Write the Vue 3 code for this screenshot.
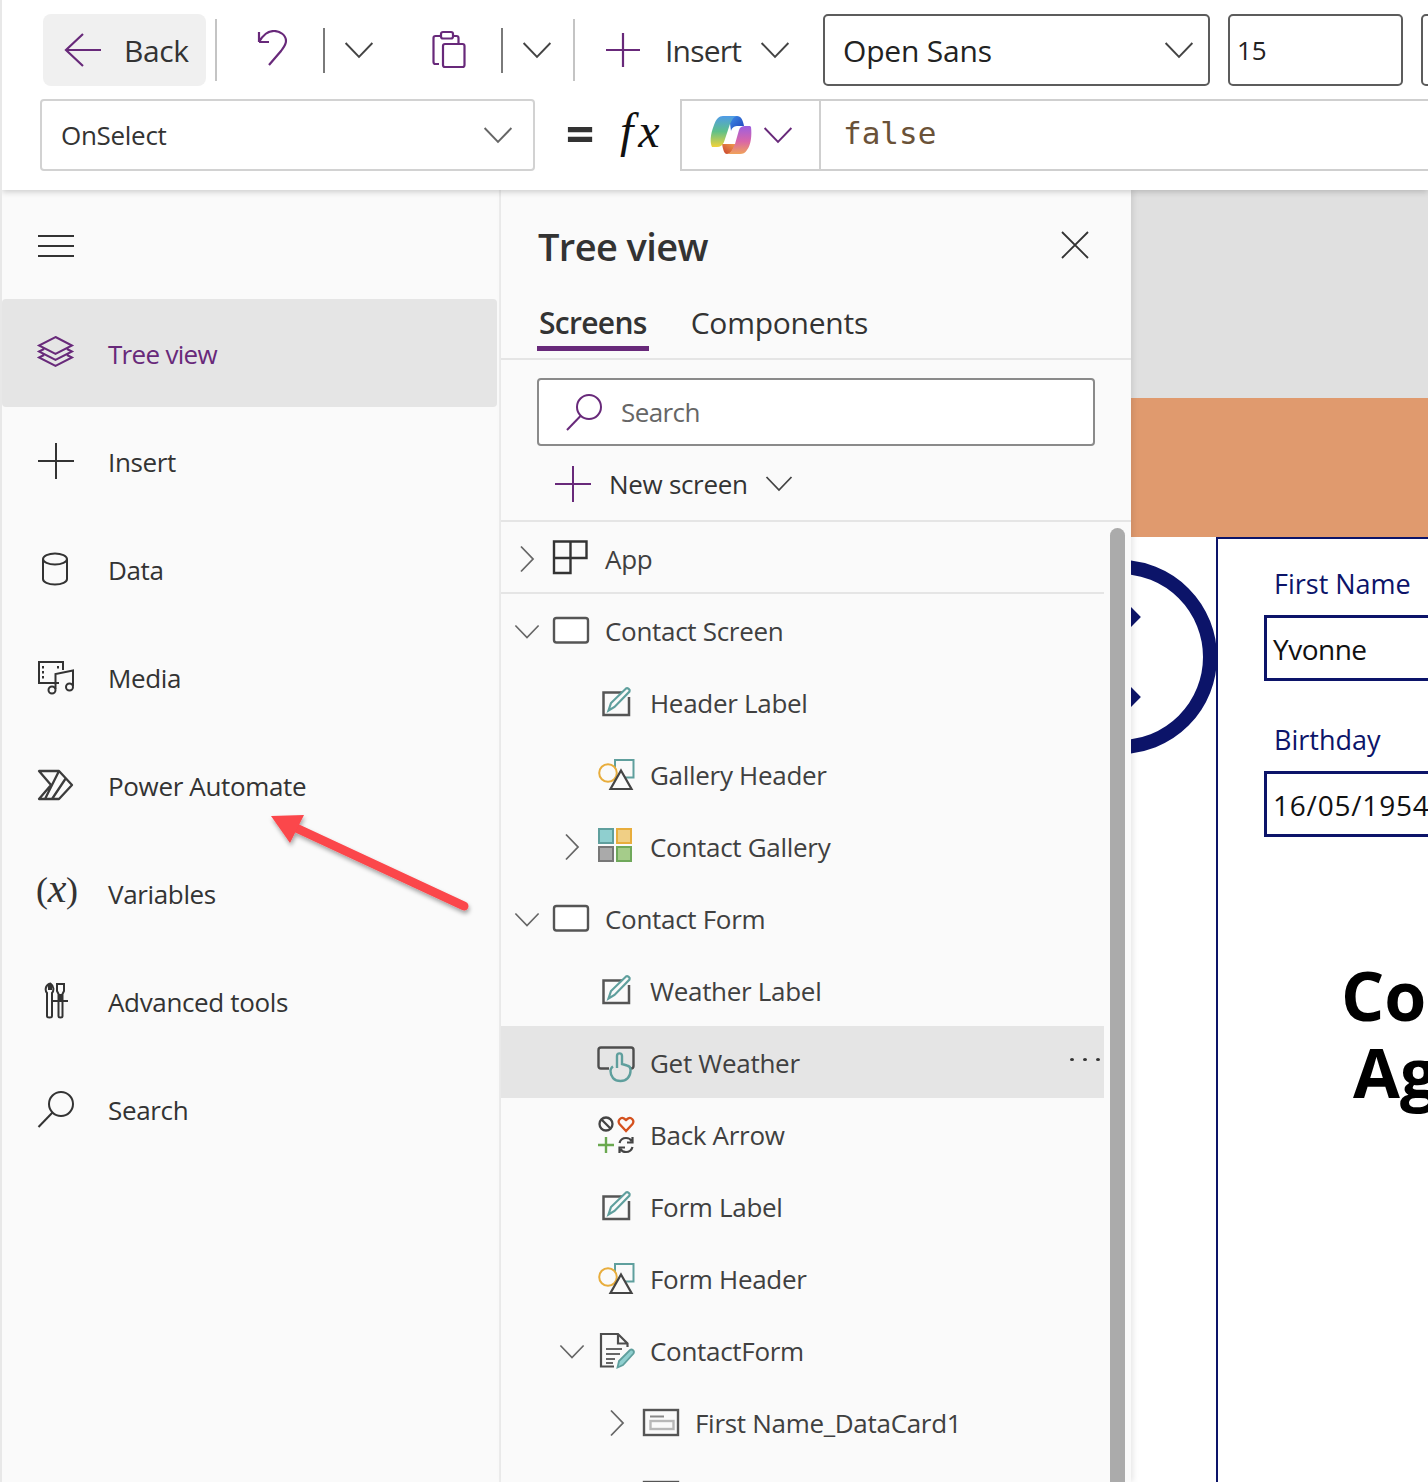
<template>
  <div class="app">
    <svg class="defs" width="0" height="0" aria-hidden="true">
      <defs>
        <linearGradient id="cp-left" x1="0" y1="0" x2="0" y2="1">
          <stop offset="0" stop-color="#4f9be8" />
          <stop offset="0.5" stop-color="#5fc08a" />
          <stop offset="1" stop-color="#f2d338" />
        </linearGradient>
        <linearGradient id="cp-right" x1="0" y1="0" x2="0" y2="1">
          <stop offset="0" stop-color="#9d5fe0" />
          <stop offset="0.55" stop-color="#d966a8" />
          <stop offset="1" stop-color="#f0a25a" />
        </linearGradient>
        <linearGradient id="cp-top" x1="0" y1="0" x2="1" y2="1">
          <stop offset="0" stop-color="#3f8fe8" />
          <stop offset="1" stop-color="#1f3fb8" />
        </linearGradient>
        <linearGradient id="cp-bottom" x1="1" y1="0" x2="0" y2="1">
          <stop offset="0" stop-color="#f0a050" />
          <stop offset="1" stop-color="#c8402c" />
        </linearGradient>
      </defs>
      <symbol id="chev-down" viewBox="0 0 28 16">
        <path d="M1.5 1.5 14 14.5 26.500 1.5" fill="none" stroke="currentColor" stroke-width="1.800" />
      </symbol>
      <symbol id="chev-right" viewBox="0 0 28 28">
        <path d="M8 1.500 20 14 8 26.500" fill="none" stroke="#666" stroke-width="1.800" />
      </symbol>
      <symbol id="ic-app" viewBox="0 0 40 40">
        <path d="M3 1.500h16.500v16.500H3zM19.500 1.500H35.500V18H19.500zM3 18h16.500v15H3z" fill="none" stroke="#333" stroke-width="2.400" />
      </symbol>
      <symbol id="ic-screen" viewBox="0 0 40 40">
        <rect x="3" y="6" width="34" height="24.500" rx="2.500" fill="#fff" stroke="#555" stroke-width="2.400" />
      </symbol>
      <symbol id="ic-label" viewBox="0 0 40 40">
        <path d="M28 8.500H7.500V31H33V13" fill="none" stroke="#555" stroke-width="2.500" />
        <path d="M12.500 26.500 15 19 30 4.500c1.500-1 4.500 1 3.500 3L18.500 23z" fill="#fafafa" stroke="#5f9f9d" stroke-width="2.200" />
      </symbol>
      <symbol id="ic-shapes" viewBox="0 0 40 40">
        <rect x="19" y="4" width="18.500" height="17.500" fill="#fafafa" stroke="#5f9f9d" stroke-width="2" />
        <circle cx="12" cy="17" r="8.800" fill="#fafafa" stroke="#e8ad3c" stroke-width="2" />
        <path d="M25 14.500 35.500 33h-21z" fill="#fafafa" stroke="#444" stroke-width="2.200" />
      </symbol>
      <symbol id="ic-gallery" viewBox="0 0 40 40">
        <rect x="3" y="1" width="14" height="14" fill="#8fcfcf" stroke="#5f9f9d" stroke-width="2" />
        <rect x="21" y="1" width="14" height="14" fill="#f0cf85" stroke="#e8ad3c" stroke-width="2" />
        <rect x="3" y="19" width="14" height="14" fill="#aaa" stroke="#777" stroke-width="2" />
        <rect x="21" y="19" width="14" height="14" fill="#a5cc8a" stroke="#6fa85a" stroke-width="2" />
      </symbol>
      <symbol id="ic-button" viewBox="0 0 40 40">
        <path d="M13 24.500H5c-1.500 0-2.500-1-2.500-2.500V6c0-1.500 1-2.500 2.500-2.500h30c1.500 0 2.500 1 2.500 2.500v16c0 1.500-1 2.500-2.500 2.500h-2" fill="none" stroke="#4d4d4d" stroke-width="2.400" />
        <path d="M21 24V12c0-3.500 5-3.500 5 0v8l5 1.500c2 .5 3.500 2 3.500 4V27c0 5.500-4 10-10 10-6.500 0-10-4.500-10-10 0-2 1-3.500 2.500-4.500" fill="#e6e6e6" stroke="#5f9f9d" stroke-width="2.400" />
      </symbol>
      <symbol id="ic-icons" viewBox="0 0 40 40">
        <circle cx="10" cy="8" r="6.500" fill="none" stroke="#444" stroke-width="2.300" />
        <path d="M5.500 3.500 14.500 12.500" stroke="#444" stroke-width="2.300" />
        <path d="M30 15 23.500 8C21 4.500 25 .5 28 2.500l2 1.500 2-1.500c3-2 7 2 4.500 5.500z" fill="none" stroke="#d4511e" stroke-width="2.300" />
        <path d="M2 29H18M10 21V37" stroke="#6aa84f" stroke-width="2.400" />
        <path d="M23.500 27c1-3.500 3.500-5 6.500-5 2.500 0 4.500 1 5.500 3M36.500 21v5.500h-5.500M36.500 31c-1 3.500-3.500 5-6.500 5-2.500 0-4.500-1-5.500-3M23.500 37v-5.500h5.500" fill="none" stroke="#444" stroke-width="2.200" />
      </symbol>
      <symbol id="ic-form" viewBox="0 0 40 40">
        <path d="M18 34.500H5V2h17l9.500 9.500V15M22 2v9.500h9.500" fill="none" stroke="#4d4d4d" stroke-width="2.200" />
        <path d="M10 17H26M10 22H24M10 27H19M10 31H17" stroke="#666" stroke-width="1.800" />
        <path d="M21.500 35.500 23 29 34 18c2-1.500 5 1 3.500 3.500L27 33z" fill="#8fcfcf" stroke="#5f9f9d" stroke-width="1.800" />
      </symbol>
      <symbol id="ic-card" viewBox="0 0 40 40">
        <rect x="3" y="6" width="34" height="25" fill="none" stroke="#555" stroke-width="2.400" />
        <path d="M9 12.500H23" stroke="#888" stroke-width="2" />
        <rect x="9.500" y="17" width="23" height="8" fill="none" stroke="#b8b8b8" stroke-width="2.400" />
      </symbol>
    </svg>

    <header class="ribbon">
      <div class="ribbon-row">
        <button type="button" class="back-btn">
          <svg class="ic" width="40" height="40" viewBox="0 0 40 40">
            <path d="M20 4 3 20 20 36M3 20H38" fill="none" stroke="#68297a" stroke-width="2.200" />
          </svg>
          <span>Back</span>
        </button>
        <i class="sep tall" style="margin-left: 9px"></i>
        <svg class="ic undo" width="40" height="40" viewBox="0 0 40 40">
          <path d="M7 12V2M7 12H17M7 12C11 5 16 1 22 1c6 0 12 4 12 10 0 4-3 7-5 10L17 35" fill="none" stroke="#68297a" stroke-width="2.200" />
        </svg>
        <i class="sep short" style="margin-left: 31px"></i>
        <svg class="chev" width="30" height="18" style="margin-left: 19px"><use href="#chev-down" /></svg>
        <svg class="ic" width="40" height="40" viewBox="0 0 40 40" style="margin-left: 55px">
          <path d="M10 34H6.500C5 34 4.500 33 4.500 32V8c0-1 .5-2 2-2H12M24 6h3.500c1.500 0 2 1 2 2v6" fill="none" stroke="#68297a" stroke-width="2.200" />
          <rect x="12" y="2" width="12" height="6.500" rx="2" fill="none" stroke="#68297a" stroke-width="2.200" />
          <rect x="14" y="14" width="21.500" height="23" rx="2" fill="none" stroke="#68297a" stroke-width="2.200" />
        </svg>
        <i class="sep short" style="margin-left: 32px"></i>
        <svg class="chev" width="30" height="18" style="margin-left: 19px"><use href="#chev-down" /></svg>
        <i class="sep tall" style="margin-left: 21px"></i>
        <svg class="ic" width="40" height="40" viewBox="0 0 40 40" style="margin-left: 28px">
          <path d="M20 3V37M3 20H37" fill="none" stroke="#68297a" stroke-width="2.200" />
        </svg>
        <span class="insert-label">Insert</span>
        <svg class="chev" width="30" height="18"><use href="#chev-down" /></svg>
        <div class="field font-field">
          <span>Open Sans</span>
          <svg class="chev" width="30" height="18"><use href="#chev-down" /></svg>
        </div>
        <div class="field size-field"><span>15</span></div>
        <div class="field stub-field"></div>
      </div>

      <div class="formula-row">
        <div class="prop-select">
          <span>OnSelect</span>
          <svg class="chev muted" width="30" height="18"><use href="#chev-down" /></svg>
        </div>
        <span class="equals">=</span>
        <span class="fx">fx</span>
        <div class="formula-box">
          <div class="copilot-cell">
            <svg width="42" height="40" viewBox="0 0 42 40">
              <path d="M19 1H27C31 1 33 5 34 11H28C25 11 22 12 21 16Z" fill="url(#cp-top)" />
              <path d="M12 29H26L22 36C21 38 19 39 17 39 14 39 13 34 12 29Z" fill="url(#cp-bottom)" />
              <path d="M13 1H27C23 2 21 6 19 12L14 27C13 30 10 32 7 32H2C0 28 0 20 4 10 6 4 9 1 13 1Z" fill="url(#cp-left)" />
              <path d="M41 12C42 20 41 30 37 35 35 38 33 39 30 39H17C21 38 23 34 25 29L29 15C30 12 32 11 35 11H40Z" fill="url(#cp-right)" />
            </svg>
            <svg class="chev purple" width="30" height="18"><use href="#chev-down" /></svg>
          </div>
          <span class="formula-text">false</span>
        </div>
      </div>
    </header>

    <main class="body">
      <nav class="sidebar">
        <div class="hamburger"><i></i><i></i><i></i></div>

        <div class="nav-item active">
          <svg class="ic" width="40" height="40" viewBox="0 0 40 40">
            <path d="M19.500 4 36 12.500 19.500 21 3 12.500ZM8 16 3 18.500 19.500 27 36 18.500 31 16M8 22 3 24.500 19.500 33 36 24.500 31 22" fill="none" stroke="#68297a" stroke-width="2" />
          </svg>
          <span>Tree view</span>
        </div>
        <div class="nav-item">
          <svg class="ic" width="40" height="40" viewBox="0 0 40 40">
            <path d="M20 2V38M2 20H38" fill="none" stroke="#333" stroke-width="2" />
          </svg>
          <span>Insert</span>
        </div>
        <div class="nav-item">
          <svg class="ic" width="40" height="40" viewBox="0 0 40 40">
            <path d="M7 10V30C7 33 12 35.500 19 35.500S31 33 31 30V10" fill="none" stroke="#333" stroke-width="2" />
            <ellipse cx="19" cy="10" rx="12" ry="5.500" fill="none" stroke="#333" stroke-width="2" />
          </svg>
          <span>Data</span>
        </div>
        <div class="nav-item">
          <svg class="ic" width="40" height="40" viewBox="0 0 40 40">
            <path d="M23 26H3V5H27V13" fill="none" stroke="#333" stroke-width="2" />
            <path d="M7 9V23M22 9V12" fill="none" stroke="#333" stroke-width="2" stroke-dasharray="2.500 2.500" />
            <path d="M19.500 32V17L37 13.500V29" fill="none" stroke="#333" stroke-width="2" />
            <circle cx="16" cy="33" r="3.500" fill="none" stroke="#333" stroke-width="2" />
            <circle cx="33.500" cy="30" r="3.500" fill="none" stroke="#333" stroke-width="2" />
          </svg>
          <span>Media</span>
        </div>
        <div class="nav-item">
          <svg class="ic" width="40" height="40" viewBox="0 0 40 40">
            <path d="M3 6H23L36 20 23 34H3L15 20ZM23 6 9 34M30 13 16 34" fill="none" stroke="#3c3c3c" stroke-width="2.300" stroke-linejoin="round" />
          </svg>
          <span>Power Automate</span>
        </div>
        <div class="nav-item">
          <span class="var-icon">(<em>x</em>)</span>
          <span>Variables</span>
        </div>
        <div class="nav-item">
          <svg class="ic" width="40" height="40" viewBox="0 0 40 40">
            <path d="M13 3C9 5 9 10 11 12V35C11 37 16 37 16 35V12C18 10 18 5 15 3V8H13Z" fill="none" stroke="#333" stroke-width="2" />
            <path d="M21 3H28V10L26.500 13V35C26.500 37 22.500 37 22.500 35V13L21 10ZM16 20H32M24.500 13V20" fill="none" stroke="#333" stroke-width="2" />
          </svg>
          <span>Advanced tools</span>
        </div>
        <div class="nav-item">
          <svg class="ic" width="40" height="40" viewBox="0 0 40 40">
            <circle cx="25" cy="15" r="12" fill="none" stroke="#333" stroke-width="2" />
            <path d="M16.500 23.500 2.500 38" fill="none" stroke="#333" stroke-width="2" />
          </svg>
          <span>Search</span>
        </div>
      </nav>

      <aside class="tree-panel">
        <div class="tree-title">
          <h2>Tree view</h2>
          <svg width="30" height="30" viewBox="0 0 30 30">
            <path d="M2 2 28 28M28 2 2 28" fill="none" stroke="#333" stroke-width="1.800" />
          </svg>
        </div>
        <div class="tabs">
          <span class="tab selected">Screens</span>
          <span class="tab">Components</span>
        </div>
        <div class="tree-search">
          <svg width="40" height="40" viewBox="0 0 40 40">
            <circle cx="25" cy="15" r="12" fill="none" stroke="#68297a" stroke-width="2" />
            <path d="M16.500 24 3 38" fill="none" stroke="#68297a" stroke-width="2" />
          </svg>
          <span>Search</span>
        </div>
        <div class="new-screen">
          <svg width="40" height="40" viewBox="0 0 40 40">
            <path d="M20 2V38M2 20H38" fill="none" stroke="#68297a" stroke-width="2" />
          </svg>
          <span>New screen</span>
          <svg class="chev" width="28" height="17"><use href="#chev-down" /></svg>
        </div>
        <div class="tree-scroll">
          <ul class="tree-list">
            <li
              v-for="row in rows"
              :key="row.id"
              class="tree-row"
              :class="{ hovered: row.hovered, ruled: row.ruled }"
              :style="{ paddingLeft: 12 + row.depth * 45 + 'px' }"
            >
              <span class="twisty">
                <svg v-if="row.twisty === 'right'" width="28" height="28"><use href="#chev-right" /></svg>
                <svg v-else-if="row.twisty === 'down'" class="chev twisty-down" width="26" height="15"><use href="#chev-down" /></svg>
              </span>
              <svg class="row-icon" width="40" height="40"><use :href="'#ic-' + row.icon" /></svg>
              <span class="row-label">{{ row.label }}</span>
              <span v-if="row.hovered" class="row-more"><i></i><i></i><i></i></span>
            </li>
          </ul>
          <div class="scrollbar"></div>
        </div>
      </aside>

      <section class="canvas">
        <div class="canvas-grey"></div>
        <div class="canvas-banner"></div>
        <div class="canvas-sheet">
          <div class="clock">
            <i class="tick tick-a"></i>
            <i class="tick tick-b"></i>
          </div>
          <div class="form-card">
            <label class="form-label">First Name</label>
            <div class="form-input name">Yvonne</div>
            <label class="form-label second">Birthday</label>
            <div class="form-input date">16/05/1954</div>
            <div class="form-heading">Co</div>
            <div class="form-heading indent">Ag</div>
          </div>
        </div>
      </section>
    </main>

    <svg class="annotation" width="220" height="110" viewBox="0 0 220 110">
      <defs>
        <filter id="arrow-shadow" x="-10%" y="-10%" width="120%" height="130%">
          <feDropShadow dx="1" dy="3" stdDeviation="2" flood-color="#000" flood-opacity="0.35" />
        </filter>
      </defs>
      <g filter="url(#arrow-shadow)">
        <path d="M32 17 202 96" fill="none" stroke="#fb464b" stroke-width="9" stroke-linecap="round" />
        <path d="M9 6 42 5 28 33Z" fill="#fb464b" />
      </g>
    </svg>
  </div>
</template>

<script setup>
const rows = [
  { id: 1, label: 'App', depth: 0, twisty: 'right', icon: 'app', ruled: true },
  { id: 2, label: 'Contact Screen', depth: 0, twisty: 'down', icon: 'screen' },
  { id: 3, label: 'Header Label', depth: 1, icon: 'label' },
  { id: 4, label: 'Gallery Header', depth: 1, icon: 'shapes' },
  { id: 5, label: 'Contact Gallery', depth: 1, twisty: 'right', icon: 'gallery' },
  { id: 6, label: 'Contact Form', depth: 0, twisty: 'down', icon: 'screen' },
  { id: 7, label: 'Weather Label', depth: 1, icon: 'label' },
  { id: 8, label: 'Get Weather', depth: 1, icon: 'button', hovered: true },
  { id: 9, label: 'Back Arrow', depth: 1, icon: 'icons' },
  { id: 10, label: 'Form Label', depth: 1, icon: 'label' },
  { id: 11, label: 'Form Header', depth: 1, icon: 'shapes' },
  { id: 12, label: 'ContactForm', depth: 1, twisty: 'down', icon: 'form' },
  { id: 13, label: 'First Name_DataCard1', depth: 2, twisty: 'right', icon: 'card' },
  { id: 14, label: '', depth: 2, icon: 'card' }
]
</script>

<style>
html,
body {
  margin: 0;
  background: #fff;
}
</style>

<style scoped>
.app {
  position: relative;
  width: 1428px;
  height: 1482px;
  overflow: hidden;
  display: flex;
  flex-direction: column;
  border-left: 2px solid #e8e8e8;
  box-sizing: border-box;
  font-family: "Open Sans", "Liberation Sans", sans-serif;
  color: #333;
  background: #fff;
}

.defs {
  position: absolute;
}

.ic {
  flex: none;
  display: block;
}

.chev {
  flex: none;
  display: block;
  color: #444;
}

.chev.muted {
  color: #666;
}

.chev.purple {
  color: #68297a;
}

/* ribbon */
.ribbon {
  flex: none;
  height: 190px;
  background: #fff;
  position: relative;
  z-index: 2;
  box-shadow: 0 2px 6px rgba(0, 0, 0, 0.18);
}

.ribbon-row {
  height: 98px;
  display: flex;
  align-items: center;
  padding: 2px 0 0 41px;
  box-sizing: border-box;
  white-space: nowrap;
}

.back-btn {
  flex: none;
  width: 163px;
  height: 72px;
  display: flex;
  align-items: center;
  gap: 21px;
  padding: 0 0 0 20px;
  border: 0;
  border-radius: 8px;
  background: #f0f0f0;
  font: inherit;
  font-size: 30px;
  letter-spacing: -0.4px;
  color: #333;
}

.sep {
  flex: none;
  display: block;
  width: 2px;
}

.sep.tall {
  height: 62px;
  background: #c4c4c4;
}

.sep.short {
  height: 45px;
  background: #7a7a7a;
}

.undo {
  margin-left: 35px;
}

.insert-label {
  flex: none;
  width: 95px;
  margin-left: 22px;
  font-size: 30px;
  letter-spacing: -0.8px;
}

.field {
  flex: none;
  box-sizing: border-box;
  height: 72px;
  margin-left: 18px;
  border: 2px solid #5c5c5c;
  border-radius: 5px;
  display: flex;
  align-items: center;
  justify-content: space-between;
  font-size: 30px;
  letter-spacing: -0.2px;
  color: #222;
}

.font-field {
  width: 387px;
  margin-left: 33px;
  padding: 0 14px 0 18px;
}

.size-field {
  width: 175px;
  padding-left: 7px;
  font-size: 26px;
}

.stub-field {
  width: 40px;
}

.formula-row {
  height: 73px;
  box-sizing: border-box;
  padding: 1px 0 0 38px;
  display: flex;
  align-items: center;
  white-space: nowrap;
}

.prop-select {
  flex: none;
  box-sizing: border-box;
  width: 495px;
  height: 72px;
  padding: 0 20px 0 19px;
  border: 2px solid #d2d2d2;
  border-radius: 4px;
  display: flex;
  align-items: center;
  justify-content: space-between;
  font-size: 26px;
  letter-spacing: -0.3px;
  color: #333;
}

.equals {
  flex: none;
  width: 30px;
  margin: -4px 0 0 30px;
  font-size: 50px;
  font-weight: 700;
  line-height: 1;
  text-align: center;
  color: #333;
}

.fx {
  flex: none;
  width: 60px;
  margin: -8px 0 0 25px;
  font-family: "Liberation Serif", serif;
  font-style: italic;
  font-size: 48px;
  letter-spacing: 5px;
  line-height: 1;
  color: #111;
}

.formula-box {
  flex: 1;
  height: 72px;
  box-sizing: border-box;
  border: 2px solid #cfcfcf;
  border-right: 0;
  display: flex;
  align-items: center;
}

.copilot-cell {
  flex: none;
  box-sizing: border-box;
  width: 139px;
  height: 100%;
  padding-left: 28px;
  border-right: 2px solid #cfcfcf;
  display: flex;
  align-items: center;
  gap: 11px;
}

.formula-text {
  margin: -5px 0 0 22px;
  font-family: "DejaVu Sans Mono", "Liberation Mono", monospace;
  font-size: 31px;
  color: #6a5238;
}

/* body */
.body {
  flex: 1;
  min-height: 0;
  display: flex;
}

.sidebar {
  flex: none;
  box-sizing: border-box;
  width: 499px;
  background: #fafafa;
  border-right: 2px solid #eee;
  padding-top: 109px;
  position: relative;
}

.hamburger {
  position: absolute;
  left: 36px;
  top: 45px;
  width: 36px;
  display: flex;
  flex-direction: column;
  gap: 8px;
}

.hamburger i {
  display: block;
  height: 2px;
  background: #333;
}

.nav-item {
  width: 495px;
  height: 108px;
  padding-left: 34px;
  box-sizing: border-box;
  display: flex;
  align-items: center;
  gap: 32px;
  font-size: 26px;
  letter-spacing: -0.35px;
  color: #333;
}

.nav-item.active {
  background: #e5e5e5;
  border-radius: 4px;
  color: #68297a;
  letter-spacing: -0.7px;
}

.nav-item > span:last-child {
  padding-top: 2px;
}

.var-icon {
  flex: none;
  width: 40px;
  margin-top: -8px;
  font-family: "Liberation Serif", serif;
  font-size: 36px;
  text-align: center;
  white-space: nowrap;
}

.var-icon em {
  font-size: 42px;
  line-height: 1;
}

.tree-panel {
  flex: none;
  width: 630px;
  background: #fafafa;
  position: relative;
  z-index: 1;
  box-shadow: 2px 0 6px rgba(0, 0, 0, 0.1);
  display: flex;
  flex-direction: column;
  min-height: 0;
}

.tree-title {
  flex: none;
  height: 116px;
  padding: 0 41px 0 37px;
  display: flex;
  align-items: center;
  justify-content: space-between;
}

.tree-title h2 {
  margin: -4px 0 0;
  font-size: 38px;
  font-weight: 600;
  letter-spacing: -0.6px;
  color: #333;
}

.tree-title svg {
  margin-top: -6px;
}

.tabs {
  flex: none;
  height: 54px;
  box-sizing: border-box;
  padding-left: 36px;
  display: flex;
  gap: 40px;
  border-bottom: 2px solid #e5e5e5;
}

.tab {
  height: 45px;
  box-sizing: border-box;
  line-height: 34px;
  padding: 0 2px;
  font-size: 30px;
  letter-spacing: -0.25px;
  color: #333;
}

.tab.selected {
  font-weight: 600;
  letter-spacing: -0.7px;
  border-bottom: 5px solid #68297a;
}

.tree-search {
  flex: none;
  box-sizing: border-box;
  width: 558px;
  height: 68px;
  margin: 18px 0 0 36px;
  padding-left: 25px;
  background: #fff;
  border: 2px solid #8a8a8a;
  border-radius: 4px;
  display: flex;
  align-items: center;
  gap: 17px;
  font-size: 26px;
  letter-spacing: -0.6px;
  color: #666;
}

.new-screen {
  flex: none;
  box-sizing: border-box;
  height: 76px;
  padding: 1px 0 0 52px;
  border-bottom: 2px solid #e5e5e5;
  display: flex;
  align-items: center;
  font-size: 26px;
  letter-spacing: -0.3px;
}

.new-screen span {
  margin: 1px 17px 0 16px;
}

.tree-scroll {
  flex: 1;
  min-height: 0;
  display: flex;
}

.tree-list {
  flex: none;
  width: 603px;
  margin: 0;
  padding: 0;
  list-style: none;
}

.tree-row {
  height: 72px;
  box-sizing: border-box;
  padding-top: 4px;
  display: flex;
  align-items: center;
  position: relative;
  font-size: 26px;
  letter-spacing: -0.3px;
  color: #404040;
}

.tree-row.ruled::after {
  content: "";
  position: absolute;
  left: 0;
  right: 0;
  bottom: 0;
  height: 2px;
  background: #e5e5e5;
}

.tree-row.hovered {
  background: #e5e5e5;
}

.twisty {
  flex: none;
  width: 28px;
  display: flex;
  justify-content: center;
  margin-top: -2px;
}

.twisty-down {
  color: #666;
}

.row-icon {
  flex: none;
  margin-left: 10px;
}

.row-label {
  margin: -2px 0 0 14px;
  white-space: nowrap;
}

.row-more {
  position: absolute;
  right: 4px;
  top: 32px;
  display: flex;
  gap: 9px;
}

.row-more i {
  display: block;
  width: 4px;
  height: 3px;
  background: #333;
  border-radius: 50%;
}

.scrollbar {
  flex: none;
  width: 15px;
  margin: 6px 0 0 6px;
  background: #ababab;
  border-radius: 8px 8px 0 0;
}

/* canvas */
.canvas {
  flex: 1;
  min-width: 0;
  overflow: hidden;
  display: flex;
  flex-direction: column;
}

.canvas-grey {
  flex: none;
  height: 208px;
  background: #e0e0e0;
}

.canvas-banner {
  flex: none;
  height: 139px;
  background: #e09a6e;
}

.canvas-sheet {
  flex: 1;
  position: relative;
  background: #fff;
  padding-left: 85px;
}

.clock {
  position: absolute;
  left: -108px;
  top: 23px;
  width: 166px;
  height: 166px;
  border: 14px solid #0c1469;
  border-radius: 50%;
}

.tick {
  position: absolute;
  left: 87px;
  width: 14px;
  height: 14px;
  background: #0c1469;
  transform: rotate(45deg);
}

.tick-a {
  top: 36px;
}

.tick-b {
  top: 116px;
}

.form-card {
  position: relative;
  box-sizing: border-box;
  width: 400px;
  height: 100%;
  border-left: 2px solid #0c1469;
  border-top: 2px solid #0c1469;
  white-space: nowrap;
}

.form-label {
  display: block;
  margin: 28px 0 0 56px;
  height: 34px;
  line-height: 34px;
  font-size: 27px;
  letter-spacing: 0;
  color: #0c1469;
}

.form-label.second {
  margin-top: 42px;
}

.form-input {
  box-sizing: border-box;
  height: 66px;
  margin: 14px 0 0 46px;
  padding-left: 6px;
  border: 3px solid #0c1469;
  line-height: 62px;
  font-size: 28px;
  color: #111;
}

.form-input.name {
  letter-spacing: -0.5px;
}

.form-input.date {
  letter-spacing: 0.8px;
}

.form-heading {
  margin-left: 123px;
  height: 75px;
  line-height: 75px;
  font-size: 68px;
  font-weight: 700;
  color: #000;
}

.form-input + .form-heading {
  margin-top: 120px;
}

.form-heading.indent {
  margin: 2px 0 0 135px;
}

.annotation {
  position: absolute;
  left: 260px;
  top: 810px;
  z-index: 3;
}
</style>
